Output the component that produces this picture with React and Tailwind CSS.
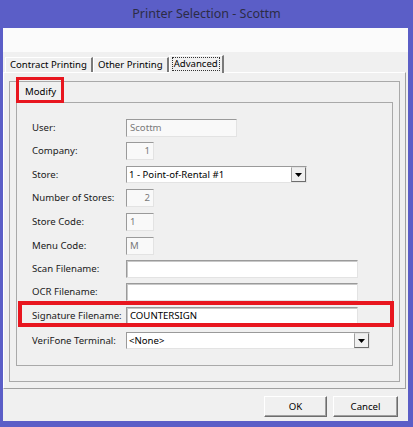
import React from "react";

const Arrow = () => (
  <svg width="7" height="4" viewBox="0 0 7 4" className="block">
    <path d="M0 0H7L3.5 4Z" fill="#000" />
  </svg>
);

function TextBox({ value = "", width, disabled = false, align = "left" }) {
  return (
    <div
      className={`h-[18px] flex items-center px-[3px] text-[9.6px] leading-none border border-t-[#9a9a9a] border-l-[#9a9a9a] border-r-[#e3e3e3] border-b-[#e3e3e3] ${
        disabled ? "bg-[#f9f9f9] text-[#7a7a7a]" : "bg-white text-black shadow-[inset_1px_1px_0_#c8c8c8]"
      } ${align === "right" ? "justify-end" : "justify-start"}`}
      style={{ width }}
    >
      {value}
    </div>
  );
}

function Combo({ value, width }) {
  return (
    <div
      className="h-[17px] flex items-stretch bg-white border border-t-[#9a9a9a] border-l-[#9a9a9a] border-r-[#e3e3e3] border-b-[#e3e3e3]"
      style={{ width }}
    >
      <div className="flex-1 flex items-center pl-[2px] text-[9.6px] leading-none text-black">{value}</div>
      <div className="w-[15px] flex items-center justify-center bg-[#f0f0f0] border border-t-[#e3e3e3] border-l-[#a0a0a0] border-r-[#6d6d6d] border-b-[#6d6d6d]">
        <Arrow />
      </div>
    </div>
  );
}

function Row({ label, children, gap }) {
  return (
    <div className="flex items-center" style={{ marginTop: gap }}>
      <div className="w-[94px] text-[9.6px] leading-none text-[#1a1a1a] whitespace-nowrap">{label}</div>
      {children}
    </div>
  );
}

function Tab({ label, selected = false }) {
  if (selected) {
    return (
      <div className="h-[18px] -mb-px px-[2px] pt-[1px] bg-[#f0f0f0] border-t border-l border-white border-r-2 border-r-[#7a7a7a] relative z-10">
        <div className="h-[14px] px-[1px] flex items-center border border-dotted border-[#333] text-[9.6px] leading-none text-black">
          {label}
        </div>
      </div>
    );
  }
  return (
    <div className="h-[15px] px-[4px] flex items-center bg-[#f0f0f0] border-t border-l border-white border-r-2 border-r-[#7a7a7a] text-[9.6px] leading-none text-black">
      {label}
    </div>
  );
}

function Button({ label, width }) {
  return (
    <div
      className="h-[21px] flex items-center justify-center bg-[#f0f0f0] border border-t-white border-l-white border-r-[#6d6d6d] border-b-[#6d6d6d] shadow-[inset_-1px_-1px_0_#a0a0a0] text-[9.6px] leading-none text-black"
      style={{ width }}
    >
      {label}
    </div>
  );
}

export default function App() {
  return (
    <div className="relative w-[413px] h-[427px] bg-[#5b5ec7] flex flex-col font-['Noto_Sans',sans-serif]">
      {/* window caption */}
      <div className="h-[28px] flex items-center justify-center text-[12.5px] text-[#2c2c46]">
        Printer Selection - Scottm
      </div>

      {/* client area */}
      <div className="ml-[3px] mr-[5px] mb-[6px] flex-1 bg-[#f0f0f0] flex flex-col">
        <div className="h-[24px] bg-[#fbfbfb]" />

        {/* tab strip */}
        <div className="h-[20px] flex items-end pl-[2px]">
          <Tab label="Contract Printing" />
          <Tab label="Other Printing" />
          <Tab label="Advanced" selected />
        </div>

        {/* tab page */}
        <div className="flex-1 mr-[2px] border border-t-white border-l-white border-r-[#a0a0a0] border-b-[#a0a0a0] px-[5px] pt-[8px] pb-[6px] flex flex-col">
          <div className="flex-1 border border-[#a9a9a9] flex flex-col px-[6px] pb-[15px]">
            <div className="h-[20px] flex items-center pl-[9px] text-[9.6px] leading-none text-black">Modify</div>

            <div className="flex-1 border border-[#a9a9a9] flex flex-col pl-[15px] pt-[16px]">
              <Row label="User:" gap={0}>
                <TextBox value="Scottm" width={111} disabled />
              </Row>
              <Row label="Company:" gap={5}>
                <TextBox value="1" width={28} disabled align="right" />
              </Row>
              <Row label="Store:" gap={6}>
                <Combo value="1 - Point-of-Rental #1" width={181} />
              </Row>
              <Row label="Number of Stores:" gap={6}>
                <TextBox value="2" width={28} disabled align="right" />
              </Row>
              <Row label="Store Code:" gap={6}>
                <TextBox value="1" width={28} disabled />
              </Row>
              <Row label="Menu Code:" gap={6}>
                <TextBox value="M" width={28} disabled />
              </Row>
              <Row label="Scan Filename:" gap={5}>
                <TextBox width={232} />
              </Row>
              <Row label="OCR Filename:" gap={5}>
                <TextBox width={232} />
              </Row>
              <Row label="Signature Filename:" gap={6}>
                <TextBox value="COUNTERSIGN" width={232} />
              </Row>
              <Row label="VeriFone Terminal:" gap={7}>
                <Combo value="<None>" width={244} />
              </Row>
            </div>
          </div>
        </div>

        {/* dialog buttons */}
        <div className="h-[32px] flex justify-end gap-[6px] pt-[7px] pr-[10px]">
          <Button label="OK" width={63} />
          <Button label="Cancel" width={65} />
        </div>
      </div>

      {/* red highlight callouts */}
      <div className="absolute left-[16px] top-[77px] w-[48px] h-[26px] border-[3px] border-[#e8161f]" />
      <div className="absolute left-[18px] top-[301px] w-[376px] h-[26px] border-[4px] border-[#e8161f]" />
    </div>
  );
}
